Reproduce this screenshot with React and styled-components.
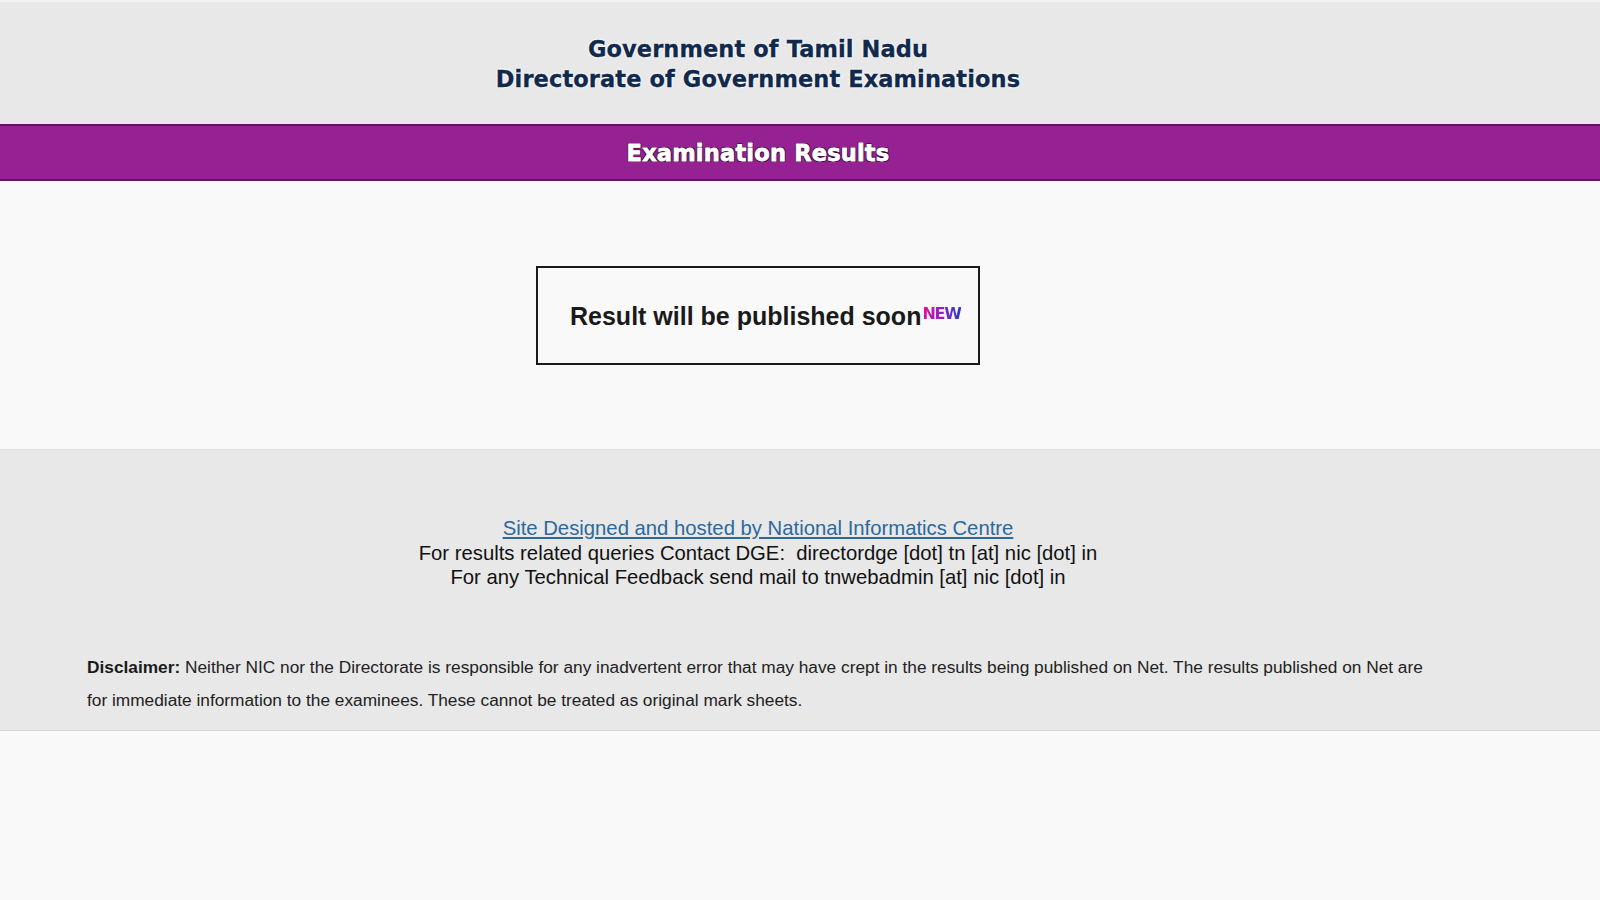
import React from 'react';
import styled, { createGlobalStyle } from 'styled-components';

const GlobalStyle = createGlobalStyle`
	html, body {
		margin: 0;
		padding: 0;
		background: #f9f9f9;
	}
	body {
		font-family: "Liberation Sans", Arial, sans-serif;
	}
`;

const Page = styled.div`
	width: 100%;
	min-height: 900px;
	background: #f9f9f9;
`;

const Inner = styled.div`
	width: 1516px;
	box-sizing: border-box;
	display: flex;
	flex-direction: column;
	align-items: center;
`;

const Header = styled.header`
	height: 124px;
	background: #e8e8e8;
	border-top: 2px solid #f1f1f1;
	box-sizing: border-box;
	display: flex;
	align-items: center;

	h1 {
		margin: 0;
		padding-top: 1px;
		font-family: "DejaVu Sans", Verdana, sans-serif;
		font-weight: bold;
		font-size: 22.5px;
		line-height: 30px;
		letter-spacing: 0.1px;
		text-align: center;
		color: #10294d;
		-webkit-text-stroke: 0.3px #10294d;
		text-shadow: 0 0 2px #fff, 0 0 2px #fff, 0 0 3px #fff;
	}
`;

const TitleBar = styled.div`
	height: 57px;
	background: #962192;
	border-top: 2px solid #5e165c;
	border-bottom: 2px solid #5e165c;
	box-sizing: border-box;
	display: flex;
	align-items: center;

	h2 {
		margin: 0;
		font-family: "DejaVu Sans", Verdana, sans-serif;
		font-weight: bold;
		font-size: 22.5px;
		letter-spacing: 0.2px;
		color: #fff;
		-webkit-text-stroke: 0.8px #fff;
		text-shadow: 1px 1px 0 #3a0a38, -1px -1px 0 #3a0a38, 1px -1px 0 #3a0a38, -1px 1px 0 #3a0a38;
	}
`;

const Main = styled.main`
	height: 269px;
	background: #f9f9f9;
	border-bottom: 1px solid #dcdcdc;
	box-sizing: border-box;
	padding-top: 85px;
`;

const NoticeBox = styled.div`
	width: 444px;
	height: 99px;
	box-sizing: border-box;
	border: 2px solid #1a1a1a;
	display: flex;
	align-items: center;
	padding-left: 32px;
	padding-top: 2px;
`;

const NoticeText = styled.span`
	font-family: "Liberation Sans", Arial, sans-serif;
	font-weight: bold;
	font-size: 25px;
	color: #1a1a1a;
	position: relative;
`;

const NewTag = styled.span`
	position: absolute;
	left: 100%;
	top: 2px;
	margin-left: 1px;
	font-family: "DejaVu Sans", Verdana, sans-serif;
	font-weight: bold;
	font-size: 16px;
	letter-spacing: -1.2px;
	background: linear-gradient(90deg, #e0109a 0%, #9a1ec8 45%, #2a3ad0 100%);
	-webkit-background-clip: text;
	background-clip: text;
	color: transparent;
`;

const Footer = styled.footer`
	height: 281px;
	background: #e8e8e8;
	border-bottom: 1px solid #d6d6d6;
	box-sizing: border-box;
	padding-top: 66px;
`;

const Credits = styled.div`
	text-align: center;
	font-family: "Liberation Sans", Arial, sans-serif;
	font-size: 20.3px;
	line-height: 24.5px;
	color: #111;

	a {
		color: #2c699c;
		text-decoration: underline;
	}
`;

const Disclaimer = styled.p`
	align-self: stretch;
	margin: 61px 0 0;
	padding: 0 72px 0 87px;
	font-family: "Liberation Sans", Arial, sans-serif;
	font-size: 17.3px;
	line-height: 33px;
	color: #222;

	b {
		color: #1a1a1a;
	}
`;

export default function App() {
	return (
		<Page>
			<GlobalStyle />
			<Header>
				<Inner>
					<h1>
						Government of Tamil Nadu
						<br />
						Directorate of Government Examinations
					</h1>
				</Inner>
			</Header>

			<TitleBar>
				<Inner>
					<h2>Examination Results</h2>
				</Inner>
			</TitleBar>

			<Main>
				<Inner>
					<NoticeBox>
						<NoticeText>
							Result will be published soon
							<NewTag>NEW</NewTag>
						</NoticeText>
					</NoticeBox>
				</Inner>
			</Main>

			<Footer>
				<Inner>
					<Credits>
						<a href="#nic">Site Designed and hosted by National Informatics Centre</a>
						<br />
						For results related queries Contact DGE:&nbsp; directordge [dot] tn [at] nic [dot] in
						<br />
						For any Technical Feedback send mail to tnwebadmin [at] nic [dot] in
					</Credits>
					<Disclaimer>
						<b>Disclaimer:</b> Neither NIC nor the Directorate is responsible for any inadvertent error that may have crept in the results being published on Net. The results published on Net are for immediate information to the examinees. These cannot be treated as original mark sheets.
					</Disclaimer>
				</Inner>
			</Footer>
		</Page>
	);
}
